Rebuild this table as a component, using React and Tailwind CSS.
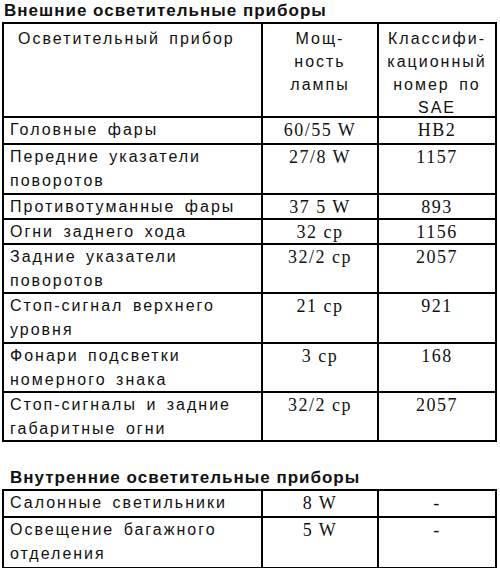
const rows = [
  { name: ["Головные фары"], power: "60/55 W", code: "HB2", h: "h-[25px]" },
  { name: ["Передние указатели", "поворотов"], power: "27/8 W", code: "1157", h: "h-[50px]" },
  { name: ["Противотуманные фары"], power: "37 5 W", code: "893", h: "h-[25px]" },
  { name: ["Огни заднего хода"], power: "32 cp", code: "1156", h: "h-[25px]" },
  { name: ["Задние указатели", "поворотов"], power: "32/2 cp", code: "2057", h: "h-[49px]" },
  { name: ["Стоп-сигнал верхнего", "уровня"], power: "21 cp", code: "921", h: "h-[50px]" },
  { name: ["Фонари подсветки", "номерного знака"], power: "3 cp", code: "168", h: "h-[49px]" },
  { name: ["Стоп-сигналы и задние", "габаритные огни"], power: "32/2 cp", code: "2057", h: "h-[49px]" },
];

const inner = [
  { name: ["Салонные светильники"], power: "8 W", code: "-", h: "h-[25px]" },
  { name: ["Освещение багажного", "отделения"], power: "5 W", code: "-", h: "h-[51px]" },
];

const sans = "font-['Liberation_Sans',Arial,sans-serif] text-[16px] tracking-[2px] [word-spacing:3px]";
const serif = "font-['Liberation_Serif','Times_New_Roman',serif] text-[18px] tracking-[1.5px]";
const title = "font-bold text-[17px] text-[#111] font-['Liberation_Sans',Arial,sans-serif] tracking-[1px]";

function Row({ row, first }) {
  return (
    <div className={`flex ${row.h} ${first ? "" : "border-t-2"} border-black`}>
      <div className={`w-[257px] pl-[6px] leading-[24px] text-[#111] ${sans}`}>
        {row.name.map((l) => (
          <div key={l}>{l}</div>
        ))}
      </div>
      <div className={`w-[116px] border-l-2 border-black text-center leading-[24px] text-[#111] ${serif}`}>
        {row.power}
      </div>
      <div className={`flex-1 border-l-2 border-black text-center leading-[24px] text-[#111] ${serif}`}>
        {row.code}
      </div>
    </div>
  );
}

export default function App() {
  return (
    <div className="w-[500px] h-[568px] bg-white overflow-hidden pl-[2px] pt-[2px]">
      <div className={`pl-[2px] h-[20px] leading-[18px] ${title}`}>
        Внешние осветительные приборы
      </div>
      <div className="w-[495px] border-2 border-black">
        <div className="flex h-[94px] border-b-2 border-black">
          <div className={`w-[257px] pl-[14px] pt-[3px] leading-[23px] text-[#111] ${sans}`}>
            Осветительный прибор
          </div>
          <div className={`w-[116px] border-l-2 border-black pt-[3px] text-center leading-[23px] text-[#111] ${sans}`}>
            <div>Мощ-</div>
            <div>ность</div>
            <div>лампы</div>
          </div>
          <div className={`flex-1 border-l-2 border-black pt-[3px] text-center leading-[23px] text-[#111] ${sans} tracking-[1px]`}>
            <div>Классифи-</div>
            <div>кационный</div>
            <div>номер по</div>
            <div>SAE</div>
          </div>
        </div>
        {rows.map((r, i) => (
          <Row key={i} row={r} first={i === 0} />
        ))}
      </div>
      <div className={`pl-[8px] pt-[27px] h-[47px] leading-[18px] ${title}`}>
        Внутренние осветительные приборы
      </div>
      <div className="w-[495px] border-2 border-black">
        {inner.map((r, i) => (
          <Row key={i} row={r} first={i === 0} />
        ))}
      </div>
    </div>
  );
}
